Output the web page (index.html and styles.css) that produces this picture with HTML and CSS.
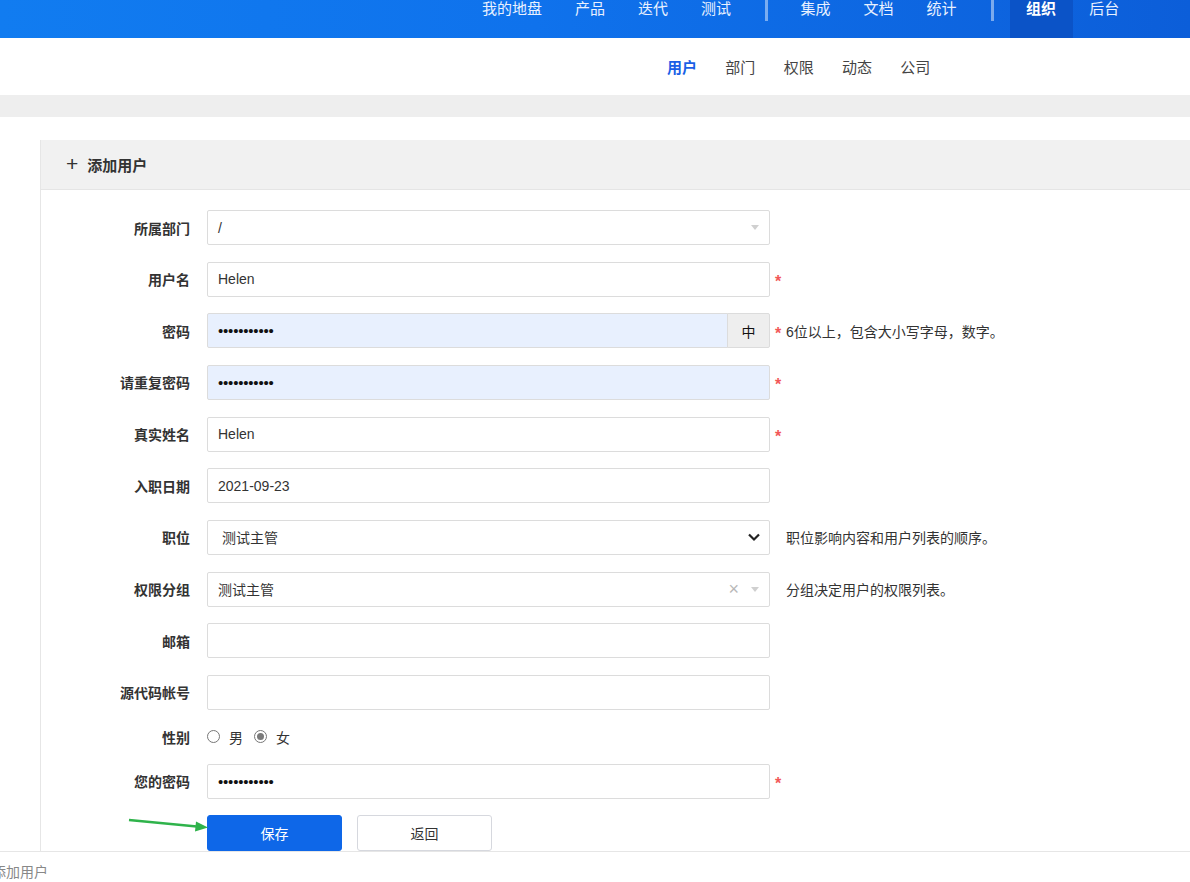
FILE: index.html
```html
<!DOCTYPE html>
<html lang="zh-CN">
<head>
<meta charset="utf-8">
<title>添加用户</title>
<link rel="stylesheet" href="styles.css">
</head>
<body>
<header class="topbar">
  <nav class="mainnav">
    <a class="nav-item">我的地盘</a>
    <a class="nav-item">产品</a>
    <a class="nav-item">迭代</a>
    <a class="nav-item">测试</a>
    <span class="nav-divider"></span>
    <a class="nav-item">集成</a>
    <a class="nav-item">文档</a>
    <a class="nav-item">统计</a>
    <span class="nav-divider"></span>
    <a class="nav-item active">组织</a>
    <a class="nav-item">后台</a>
  </nav>
</header>
<div class="subbar">
  <a class="sub-item active">用户</a>
  <a class="sub-item">部门</a>
  <a class="sub-item">权限</a>
  <a class="sub-item">动态</a>
  <a class="sub-item">公司</a>
</div>
<div class="band"></div>
<main class="content">
  <section class="panel">
    <div class="panel-head"><span class="plus">+</span>添加用户</div>
    <form class="form">
      <div class="row">
        <label class="label">所属部门</label>
        <div class="field">
          <div class="control picker"><span>/</span><span class="caret"></span></div>
        </div>
      </div>
      <div class="row">
        <label class="label">用户名</label>
        <div class="field"><div class="control">Helen</div></div>
        <div class="extra"><span class="req">*</span></div>
      </div>
      <div class="row">
        <label class="label">密码</label>
        <div class="field group">
          <div class="control autofill dots">•••••••••••</div>
          <span class="addon">中</span>
        </div>
        <div class="extra"><span class="req">*</span><span class="help">6位以上，包含大小写字母，数字。</span></div>
      </div>
      <div class="row">
        <label class="label">请重复密码</label>
        <div class="field"><div class="control autofill dots">•••••••••••</div></div>
        <div class="extra"><span class="req">*</span></div>
      </div>
      <div class="row">
        <label class="label">真实姓名</label>
        <div class="field"><div class="control">Helen</div></div>
        <div class="extra"><span class="req">*</span></div>
      </div>
      <div class="row">
        <label class="label">入职日期</label>
        <div class="field"><div class="control">2021-09-23</div></div>
      </div>
      <div class="row">
        <label class="label">职位</label>
        <div class="field">
          <div class="control select"><span>测试主管</span>
            <svg class="chev" width="14" height="10" viewBox="0 0 14 10"><path d="M2 2.5 L7 7.5 L12 2.5" fill="none" stroke="#222" stroke-width="2.2"/></svg>
          </div>
        </div>
        <div class="extra plain"><span class="help">职位影响内容和用户列表的顺序。</span></div>
      </div>
      <div class="row">
        <label class="label">权限分组</label>
        <div class="field">
          <div class="control picker"><span>测试主管</span><span class="clear">×</span><span class="caret"></span></div>
        </div>
        <div class="extra plain"><span class="help">分组决定用户的权限列表。</span></div>
      </div>
      <div class="row">
        <label class="label">邮箱</label>
        <div class="field"><div class="control"></div></div>
      </div>
      <div class="row">
        <label class="label">源代码帐号</label>
        <div class="field"><div class="control"></div></div>
      </div>
      <div class="row short">
        <label class="label">性别</label>
        <div class="radios">
          <span class="radio"></span><span class="radio-text">男</span>
          <span class="radio checked"></span><span class="radio-text">女</span>
        </div>
      </div>
      <div class="row">
        <label class="label">您的密码</label>
        <div class="field"><div class="control dots">•••••••••••</div></div>
        <div class="extra"><span class="req">*</span></div>
      </div>
      <div class="row actions">
        <span class="label"></span>
        <button type="button" class="btn primary">保存</button>
        <button type="button" class="btn">返回</button>
        <svg class="arrow" width="84" height="16" viewBox="0 0 84 16"><path d="M1 3 L74 10" stroke="#2fb34b" stroke-width="2.4" fill="none"/><path d="M68 4.5 L80 10.5 L67 14.5 Z" fill="#2fb34b"/></svg>
      </div>
    </form>
  </section>
</main>
<footer class="footer"><span class="footer-text">添加用户</span></footer>
</body>
</html>
```

FILE: styles.css
```css
* { box-sizing: border-box; }
html, body {
  margin: 0;
  padding: 0;
  width: 1190px;
  height: 882px;
  overflow: hidden;
  background: #fff;
  font-family: "Liberation Sans", "Noto Sans CJK SC", sans-serif;
  font-size: 14px;
  color: #333;
}
a { text-decoration: none; cursor: pointer; }

.topbar {
  height: 38px;
  background: linear-gradient(90deg, #117cf0 0%, #0f72ec 45%, #0c5ed9 100%);
}
.mainnav {
  display: flex;
  align-items: flex-start;
  height: 38px;
  padding-left: 465.5px;
}
.nav-item {
  display: block;
  height: 38px;
  padding: 0 16.5px;
  line-height: 18px;
  font-size: 15px;
  color: #e9f1ff;
}
.nav-item.active {
  background: #0b53c7;
  color: #fff;
  font-weight: bold;
}
.nav-divider {
  width: 3px;
  height: 21px;
  background: rgba(255, 255, 255, 0.45);
  margin: 0 16px 0 17.5px;
}

.subbar {
  height: 57px;
  display: flex;
  align-items: center;
  padding-left: 667px;
  gap: 28.3px;
}
.sub-item {
  font-size: 15px;
  color: #444;
}
.sub-item.active {
  color: #1a5fe6;
  font-weight: bold;
}

.band {
  height: 22px;
  background: #eeeeee;
}

.content {
  padding: 23px 0 0 40px;
}
.panel {
  border-left: 1px solid #e6e6e6;
  width: 1150px;
}
.panel-head {
  height: 50px;
  background: #f1f1f1;
  border-bottom: 1px solid #e5e5e5;
  display: flex;
  align-items: center;
  padding-left: 25px;
  font-size: 15px;
  font-weight: bold;
  color: #333;
}
.plus {
  font-size: 21px;
  font-weight: normal;
  margin-right: 9px;
  line-height: 1;
  position: relative;
  top: -1px;
}

.form {
  padding-top: 20px;
  display: flex;
  flex-direction: column;
  gap: 16.67px;
}
.row {
  display: flex;
  align-items: center;
  height: 35px;
}
.row.short { height: 20.6px; }
.label {
  width: 166px;
  padding-right: 17px;
  text-align: right;
  font-weight: bold;
  color: #333;
  flex: none;
}
.field {
  width: 563px;
  height: 35px;
  flex: none;
  display: flex;
}
.control {
  flex: 1;
  height: 35px;
  border: 1px solid #dcdcdc;
  border-radius: 2px;
  background: #fff;
  display: flex;
  align-items: center;
  padding: 0 10px;
  color: #333;
  font-size: 14px;
}
.control.autofill { background: #e8f0fe; }
.control.dots {
  font-size: 15px;
  letter-spacing: -0.2px;
  color: #111;
}
.group .control { border-radius: 2px 0 0 2px; }
.addon {
  width: 43px;
  height: 35px;
  border: 1px solid #dcdcdc;
  margin-left: -1px;
  background: #eeeeee;
  display: flex;
  align-items: center;
  justify-content: center;
  color: #111;
  border-radius: 0 2px 2px 0;
}
.picker span:first-child { flex: 1; }
.caret {
  width: 0;
  height: 0;
  border-left: 4.5px solid transparent;
  border-right: 4.5px solid transparent;
  border-top: 5px solid #d0d0d0;
  margin-left: 12px;
}
.clear {
  color: #b8b8b8;
  font-size: 18px;
  line-height: 1;
}
.select { padding-left: 14px; }
.select span { flex: 1; }
.chev { margin-right: -2px; }

.extra {
  display: flex;
  align-items: center;
  padding-left: 5px;
}
.extra.plain { padding-left: 16px; }
.req {
  color: #f25858;
  font-size: 16px;
  font-weight: bold;
  width: 10px;
  position: relative;
  top: 3px;
}
.help {
  color: #333;
  font-size: 14px;
}
.extra .req + .help { margin-left: 1px; }

.radios {
  display: flex;
  align-items: center;
  height: 20px;
}
.radio {
  width: 13px;
  height: 13px;
  border: 1px solid #777;
  border-radius: 50%;
  background: #fff;
  margin-right: 9px;
  position: relative;
}
.radio.checked::after {
  content: "";
  position: absolute;
  left: 2px;
  top: 2px;
  width: 7px;
  height: 7px;
  border-radius: 50%;
  background: #7a7a7a;
}
.radio-text {
  margin-right: 11px;
  color: #333;
}

.actions {
  position: relative;
  height: 36px;
  align-items: flex-start;
}
.btn {
  width: 135px;
  height: 36px;
  border: 1px solid #d6d8de;
  border-radius: 3px;
  background: #fff;
  font-family: "Liberation Sans", "Noto Sans CJK SC", sans-serif;
  font-size: 14px;
  color: #333;
  margin-right: 15px;
  padding: 0;
}
.btn.primary {
  background: #0e67e8;
  border-color: #0e67e8;
  color: #fff;
}
.arrow {
  position: absolute;
  left: 87px;
  top: 2px;
}

.footer {
  position: fixed;
  left: 0;
  right: 0;
  bottom: 0;
  height: 31px;
  background: #fff;
  border-top: 1px solid #e6e6e6;
  overflow: hidden;
}
.footer-text {
  position: absolute;
  left: -8px;
  top: 11px;
  font-size: 14px;
  color: #888;
  line-height: 18px;
}
```
